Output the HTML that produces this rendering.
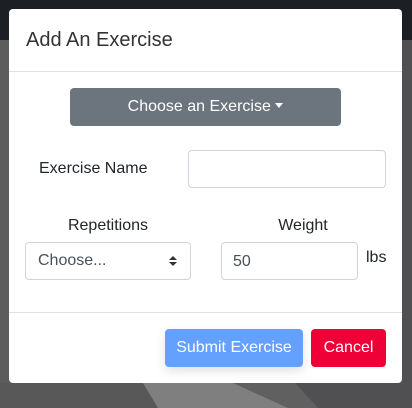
<!DOCTYPE html><html><head><style>
body{margin:0;width:412px;height:408px;overflow:hidden;background:#565656;font-family:"Liberation Sans",sans-serif;position:relative}
.top{position:absolute;left:0;top:0;width:412px;height:40px;background:#1c1f23}
.m{position:absolute;left:9px;top:9px;width:393px;height:374px;background:#fff;border-radius:4px}
.a{position:absolute;color:#212529}
.in{position:absolute;border:1px solid #ced4da;border-radius:4px;background:#fff;box-sizing:border-box}
</style></head><body>
<div class="top"></div>
<div style="position:absolute;left:0;top:40px;width:9px;height:368px;background:#5c5c5c"></div>
<div style="position:absolute;left:402px;top:40px;width:10px;height:368px;background:#505052"></div>
<svg style="position:absolute;left:0;top:383px" width="412" height="25">
<rect x="0" y="0" width="412" height="25" fill="#585858"/>
<polygon points="295,0 412,0 412,25 318,25" fill="#505052"/>
<polygon points="233,0 295,0 318,25 288,25" fill="#606060"/>
<polygon points="143,0 233,0 288,25 158,25" fill="#7f7f7f"/>
</svg>
<div class="m"></div>
<div class="a" style="left:26px;top:29px;font-size:20px;color:#333">Add An Exercise</div>
<div style="position:absolute;left:9px;top:71px;width:393px;height:1px;background:#dee2e6"></div>
<div style="position:absolute;left:70px;top:88px;width:271px;height:38px;background:#6c757d;border-radius:4px;color:#fff;font-size:16px;line-height:38px;text-align:center">Choose an Exercise <span style="display:inline-block;width:0;height:0;border-left:4px solid transparent;border-right:4px solid transparent;border-top:5px solid #fff;vertical-align:3px"></span></div>
<div class="a" style="left:39px;top:160px;font-size:16px">Exercise Name</div>
<div class="in" style="left:188px;top:150px;width:198px;height:38px"></div>
<div class="a" style="left:25px;width:166px;text-align:center;top:217px;font-size:16px">Repetitions</div>
<div class="a" style="left:221px;width:164px;text-align:center;top:217px;font-size:16px">Weight</div>
<div class="in" style="left:25px;top:242px;width:166px;height:38px;color:#495057;font-size:16px;line-height:36px;padding-left:12px">Choose...<span style="position:absolute;right:13px;top:13px;width:0;height:0;border-left:4px solid transparent;border-right:4px solid transparent;border-bottom:4px solid #333"></span><span style="position:absolute;right:13px;top:19px;width:0;height:0;border-left:4px solid transparent;border-right:4px solid transparent;border-top:4px solid #333"></span></div>
<div class="in" style="left:221px;top:242px;width:137px;height:38px;color:#495057;font-size:16px;line-height:38px;padding-left:11px">50</div>
<div class="a" style="left:366px;top:249px;font-size:16px">lbs</div>
<div style="position:absolute;left:9px;top:312px;width:393px;height:1px;background:#dee2e6"></div>
<div style="position:absolute;left:165px;top:329px;width:138px;height:38px;background:#64a1ff;border-radius:4px;color:#fff;font-size:16px;line-height:38px;text-align:center;box-shadow:0 4px 10px rgba(0,0,0,.12)">Submit Exercise</div>
<div style="position:absolute;left:311px;top:329px;width:75px;height:38px;background:#ef0037;border-radius:4px;color:#fff;font-size:16px;line-height:38px;text-align:center">Cancel</div>
</body></html>
